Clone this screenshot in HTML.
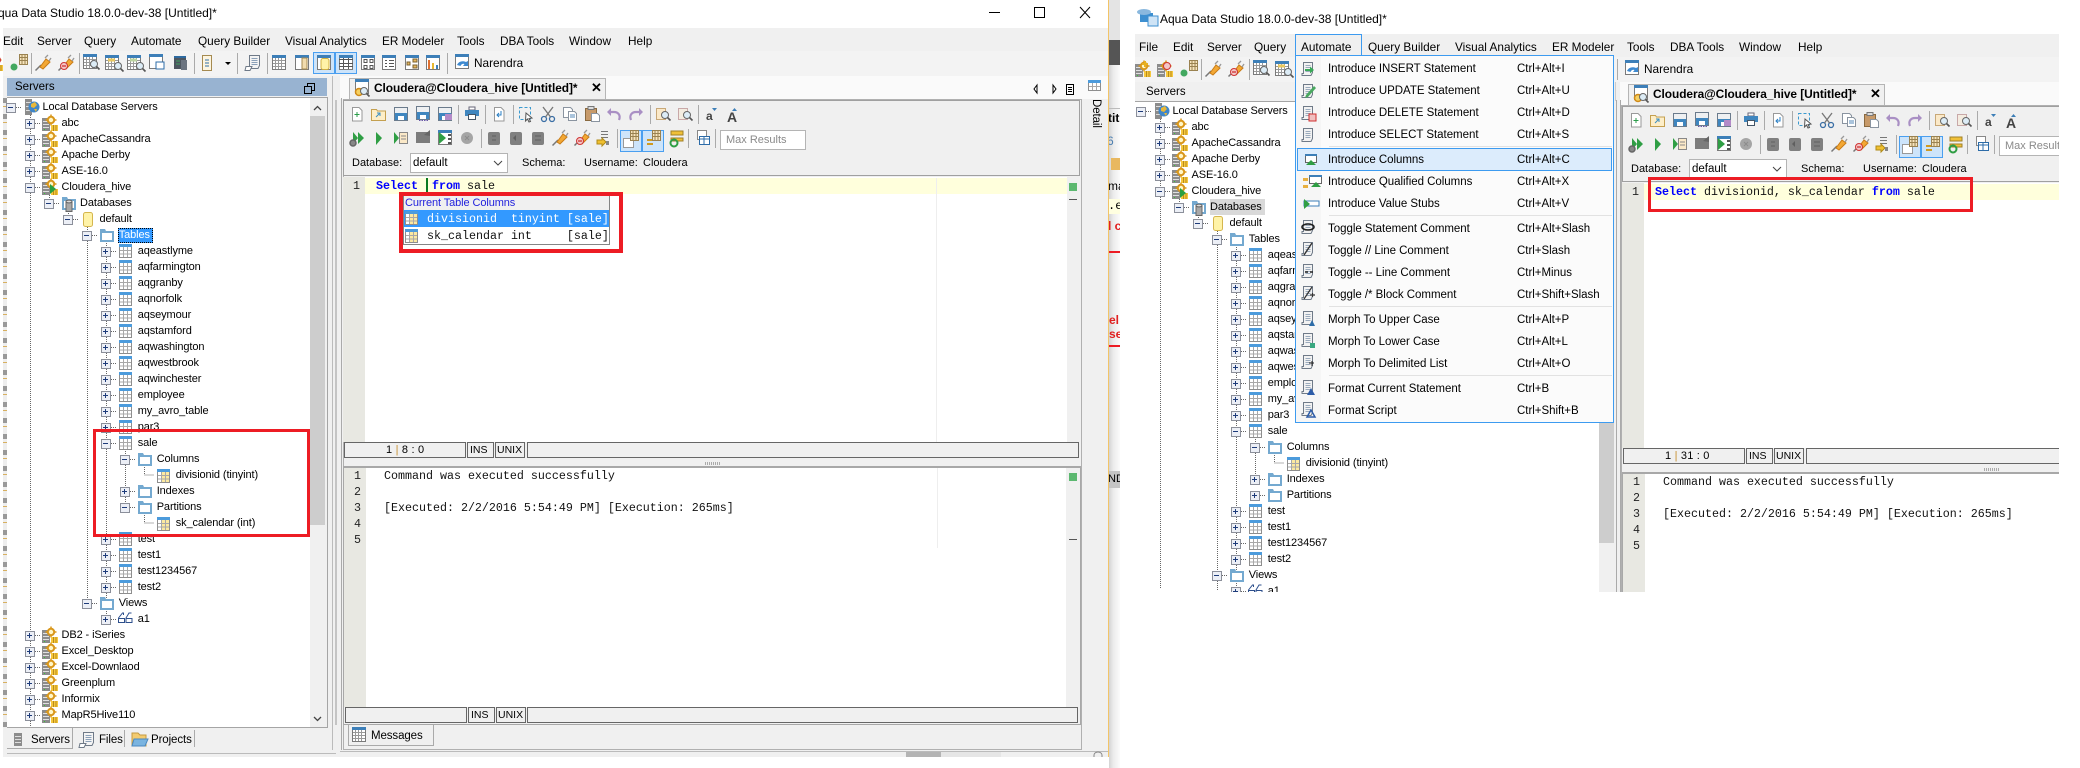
<!DOCTYPE html>
<html><head><meta charset="utf-8"><title>Aqua Data Studio</title>
<style>
html,body{margin:0;padding:0;width:2080px;height:768px;overflow:hidden;background:#fff}
body{position:relative;font:11px "Liberation Sans",sans-serif;color:#000}
div,p,svg{position:absolute;margin:0;box-sizing:border-box}
p{white-space:pre;line-height:16px}
svg{left:0;top:0;overflow:visible}
.m{font-size:11.8px}
.tr p{letter-spacing:-.1px}
.d0{left:42.5px}.d1{left:61.5px}.d2{left:80px}.d3{left:99.5px}.d4{left:118.7px}.d5{left:137.7px}.d6{left:156.7px}.d7{left:175.7px}
.c{font-family:"Liberation Mono",monospace;font-size:11.67px;color:#111}
.c b{color:#00f}
.ln{font-family:"Liberation Mono",monospace;font-size:11.67px;color:#222}
.st{background:#f0f0f0;border:1px solid #666;border-top-width:1px;height:16px}
.mi p{font-size:11.5px;letter-spacing:-.03px}
.sep{height:1px;background:#e2e2e2;left:33px;width:283px}
</style></head><body>
<svg width="0" height="0"><defs>
<g id="ep"><path d="M-4.5-4.5h9v9h-9z" fill="#eceff6" stroke="#8b8f9a"/><path d="M-3-.5h5M-.5-3v5" stroke="#1d3b7a"/><path d="M5-.5h5" stroke="#666" stroke-dasharray="1 1"/></g>
<g id="em"><path d="M-4.5-4.5h9v9h-9z" fill="#eceff6" stroke="#8b8f9a"/><path d="M-3-.5h5" stroke="#1d3b7a"/><path d="M5-.5h5" stroke="#666" stroke-dasharray="1 1"/></g>
<g id="tbl"><path d="M.5.5h12v13H.5z" fill="#fff" stroke="#8e8e8e"/><path d="M0 0h13v3H0z" fill="#4c9bdc"/><path d="M4.5 3v10M8.5 3v10M1 6.5h11M1 10h11" stroke="#a8a8a8"/></g>
<g id="col"><path d="M.5.5h12v13H.5z" fill="#fff" stroke="#8e8e8e"/><path d="M5 3h7v10H5z" fill="#fce9a0"/><path d="M0 0h13v3H0z" fill="#4c9bdc"/><path d="M4.5 3v10M8.5 3v10M1 6.5h11M1 10h11" stroke="#a8a8a8"/></g>
<g id="fold"><path d="M0 0h5l1 2h8v11H0z" fill="#74a9d0"/><path d="M2 4h10v7H2z" fill="#fff"/></g>
<g id="srv"><path d="M0 3h8v13H0z" fill="#8c8c8c"/><path d="M1 6.5h6M1 9.5h6M1 12.5h6" stroke="#e0e0e0"/><path d="M2 14.5h1" stroke="#3c3"/><circle cx="9" cy="5" r="3.2" fill="#fff6c8" stroke="#d9971c" stroke-width="2"/><path d="M9-.5v2M9 8.5v2M3.5 5h2M12.5 5h2" stroke="#d9971c" stroke-width="1.5"/><path d="M9 10h7v6H9z" fill="#f6c83e"/><path d="M11.5 10v6M14 10v6" stroke="#b88a1a"/></g>
<g id="glob"><path d="M0 0h7v16H0z" fill="#8c8c8c"/><path d="M1 3.5h5M1 7.5h5M1 11.5h5" stroke="#ddd"/><circle cx="9" cy="8" r="5.5" fill="#3f86c9"/><path d="M6 5l4-2 2 3-3 3-3-1zM9 10l3 0-1 3z" fill="#e8b83a"/></g>
<g id="dbf"><path d="M0 0h5l1 2h8v11H0z" fill="#74a9d0"/><path d="M2 4h10v7H2z" fill="#fff"/><path d="M4 4.5h6v10H4z" fill="#a8a8a8" stroke="#666"/><ellipse cx="7" cy="4.5" rx="3" ry="1.4" fill="#ddd" stroke="#666"/></g>
<g id="ydb"><rect x=".5" y=".5" width="9" height="14" rx="2" fill="#fff3a8" stroke="#d5b64e"/></g>
<g id="gl"><path d="M.5 11V7l4-5h1v2M8 11V7l3-5h2.5" fill="none" stroke="#2d4f8c"/><path d="M.5 7.5h6v4h-6zM8 7.5h6v4H8z" fill="none" stroke="#2d4f8c"/></g>
<g id="t"><path d="M-6.5-7.5h13v14h-13z" fill="#fff" stroke="#7a7a7a"/><path d="M-7-8H7v3H-7z" fill="#3d7fb8"/></g>
<g id="tg"><use href="#t"/><path d="M-6-2.5H6M-6 .5H6M-6 3.5H6M-3.5-5v11M-.5-5v11M2.5-5v11" stroke="#999"/></g>
<g id="mag"><circle cx="2" cy="2" r="3.5" fill="#dcecf6" stroke="#666"/><path d="M4.5 4.5l3 3" stroke="#555" stroke-width="1.6"/></g>
<g id="pg"><path d="M-4.5-6.5h6.5l3 3v10.5h-9.500z" fill="#fff" stroke="#999"/></g>
<g id="sv"><path d="M-6.500-6.500h13v13h-13z" fill="#eef0f2" stroke="#6b7b8c"/><path d="M-6-1H6v7H-6z" fill="#3f86bf"/><path d="M-3 2h6v4h-6z" fill="#fff"/></g>
<g id="plug"><path d="M-7.500 7.500L-2 2" stroke="#777" stroke-width="1.500"/><path d="M-3 4L3-4l4 3-7 7z" fill="#f3a835" stroke="#c97c16"/><path d="M2-5l3-3M6-2l2-3" stroke="#999" stroke-width="1.300"/></g>
<g id="px"><use href="#plug"/><circle cx="-2" cy="3" r="3.500" fill="#f3c6c6" stroke="#cf3434"/><path d="M-4 3h4" stroke="#cf3434" stroke-width="1.300"/></g>
<g id="tan"><path d="M-.500-7.500h8v10h-8z" fill="#f7e4bc" stroke="#9a8250"/><path d="M2-7v10M5-7v10M0-4.500h7M0-1.500h7" stroke="#9a8250"/></g>
<g id="scr"><path d="M-4.500-6.500h10v10l-1.500 3h-10v-2h1.500z" fill="#f4f4f4" stroke="#6f7a88"/><path d="M-2.500-3.500h6M-2.500-1.500h6M-2.500.5h6M-2.500 2.500h6" stroke="#8ba0b8"/></g>

<g id="chrome">
<use href="#srv" x="-35" y="55"/><path d="M-28 58h6m-3-3v6" stroke="#e8b020" stroke-width="2"/>
<use href="#srv" x="-13" y="55"/><circle cx="-3" cy="60" r="3.500" fill="#f3c6c6" stroke="#cf3434"/>
<use href="#tan" x="20" y="62"/><circle cx="14" cy="67" r="3.500" fill="#43a860"/>
<path d="M31.500 53v21" stroke="#aaa"/>
<use href="#plug" x="43" y="63"/><use href="#px" x="66" y="63"/>
<path d="M79.500 53v21" stroke="#aaa"/>
<use href="#tg" x="90" y="62"/><use href="#mag" x="92" y="62"/>
<use href="#tg" x="112" y="63"/><use href="#mag" x="116" y="64"/><path d="M108 60h7" stroke="#e8c860" stroke-width="3"/>
<use href="#tg" x="134" y="63"/><use href="#mag" x="138" y="64"/><path d="M130 60h7" stroke="#bcd4a0" stroke-width="3"/>
<use href="#t" x="156" y="62"/><path d="M156 62h8v7h-8z" fill="#fff" stroke="#2d6ca8"/>
<path d="M174 56h12v13h-12z" fill="#4d5660"/><path d="M174 56h12v2h-12z" fill="#2e6aa0"/><path d="M176 61h4M176 64h4" stroke="#3ea060"/><path d="M181 60h6v10h-6z" fill="#6b7480"/>
<path d="M194.500 53v21" stroke="#aaa"/>
<path d="M202.500 55.500h9v15h-9z" fill="#fdf5e0" stroke="#a58a50"/><path d="M205 60h4M205 63h4M205 66h4" stroke="#2f70a8"/>
<path d="M225 62h6l-3 3z" fill="#000"/><path d="M237.500 53v21" stroke="#aaa"/>
<use href="#scr" x="254" y="62"/><path d="M246 66.500h6l-2 4h-5z" fill="#fff" stroke="#6f7a88"/>
<path d="M267.500 53v21" stroke="#aaa"/>
<use href="#tg" x="279" y="63"/>
<use href="#t" x="302" y="63"/><path d="M302 58h5v11h-5z" fill="#f2dcae" stroke="#a58a50"/>
<path d="M313.500 52.500h21v21h-21z" fill="#cde4fa" stroke="#4a9ff0"/><path d="M335.500 52.500h21v21h-21z" fill="#cde4fa" stroke="#4a9ff0"/>
<use href="#t" x="324" y="63"/><rect x="321" y="58.500" width="8" height="11" rx="2" fill="#fff3a8" stroke="#d0b040"/>
<use href="#t" x="346" y="63"/><path d="M339 59.500h14M339 63.500h14M339 66.500h14M343.500 58v11M348.500 58v11" stroke="#555"/>
<use href="#t" x="368" y="63"/><path d="M364 59.500h3v3h-3zM370 59.500h3v3h-3zM364 65.500h3v3h-3zM370 65.500h3v3h-3z" fill="none" stroke="#555"/>
<use href="#t" x="389" y="63"/><path d="M385 60.500h2M389 60.500h5M385 63.500h2M389 63.500h5M385 66.500h2M389 66.500h5" stroke="#555"/>
<use href="#t" x="412" y="63"/><path d="M407 62h3v3h-3zM413 59h4v3h-4zM413 65h4v3h-4z" fill="#e6b860" stroke="#7a6030"/>
<use href="#t" x="433" y="63"/><path d="M428 60h2v9h-2z" fill="#e07030"/><path d="M432 63h2v6h-2z" fill="#e8b830"/><path d="M436 65h2v4h-2z" fill="#3d7fb8"/>
<path d="M447.500 53v21" stroke="#aaa"/>
<use href="#t" x="462" y="62"/><path d="M457 65a6 5 0 0 1 9-3l2-1 0 5-5 0 1.500-2a3 3 0 0 0-4 2z" fill="#3f8ad0"/>
</g>

<g id="edtb">
<use href="#pg" x="357" y="114"/><path d="M354.500 114.500h5M357 112v5" stroke="#2a9d4a"/>
<path d="M371.500 109.500h5l1 1.500h8v9.500h-14z" fill="#fdeec8" stroke="#c4a050"/><path d="M376 117l4-4m-3 0h3v3" stroke="#3a8fc4" fill="none"/>
<use href="#sv" x="401" y="114"/><use href="#sv" x="423" y="113"/><path d="M419 120.500h9" stroke="#6a5aa8" stroke-dasharray="1.500 1"/>
<use href="#sv" x="445" y="114"/><path d="M445 114h7v6h-7z" fill="#b38ac8"/>
<path d="M458.500 105v19" stroke="#aaa"/>
<path d="M469 107h6v3h-6z" fill="#fff" stroke="#667"/><path d="M465 110h14v6h-14z" fill="#3f86bf"/><path d="M468.500 114.500h7v5h-7z" fill="#fff" stroke="#456"/>
<path d="M485.500 105v19" stroke="#aaa"/>
<use href="#pg" x="499" y="114"/><path d="M501 111v4h-4m2-2l-2 2 2 2" stroke="#2a7fc4" fill="none"/>
<path d="M513.500 105v19" stroke="#aaa"/>
<path d="M519.500 107.500h11v12h-11z" fill="none" stroke="#3a9ad0" stroke-dasharray="3 2"/><path d="M526 113l6 5-3 .5 1.500 3-1.500.5-1.500-3-2 2z" fill="#fff" stroke="#555"/>
<circle cx="544" cy="119" r="2.500" fill="none" stroke="#3a6ea5" stroke-width="1.300"/><circle cx="552" cy="119" r="2.500" fill="none" stroke="#3a6ea5" stroke-width="1.300"/><path d="M543 107l7.500 10M553 107l-7.500 10" stroke="#777" stroke-width="1.300"/>
<path d="M563.500 107.500h7l2 2v8h-9z" fill="#fff" stroke="#8a94a0"/><path d="M568.500 111.500h6l2 2v7h-8z" fill="#fff" stroke="#8a94a0"/><path d="M570 115h5M570 117h5" stroke="#5588b8"/>
<path d="M585.500 108.500h11v12h-11z" fill="#c79a6a" stroke="#8a6a40"/><path d="M588 106.500h6v3h-6z" fill="#ddd" stroke="#777"/><path d="M591.500 113.500h6l2 2v6h-8z" fill="#fff" stroke="#8a94a0"/>
<path d="M619 120c2-5-1-8-5-8h-3" fill="none" stroke="#a98fc4" stroke-width="2.200"/><path d="M607 112l4-4v8z" fill="#a98fc4"/>
<path d="M631 120c-2-5 1-8 5-8h3" fill="none" stroke="#a98fc4" stroke-width="2.200"/><path d="M643 112l-4-4v8z" fill="#a98fc4"/>
<path d="M650.500 105v19" stroke="#aaa"/>
<path d="M656.500 108.500h9v11h-9z" fill="#fbe9c8" stroke="#c8a878"/><use href="#mag" x="663" y="113"/>
<path d="M678.500 108.500h9v11h-9z" fill="#f4ece0" stroke="#c8a8a8"/><use href="#mag" x="685" y="113"/>
<path d="M698.500 105v19" stroke="#aaa"/>
<text x="706" y="120" font-size="12" font-family="Liberation Sans" font-weight="bold" fill="#444">a</text><path d="M712 108h5l-2.500 3z" fill="#3d7fb8"/>
<text x="727" y="122" font-size="14" font-family="Liberation Sans" font-weight="bold" fill="#444">A</text><path d="M732 111h5l-2.500-3z" fill="#3d7fb8"/>

<path d="M353 132l5 6-5 6zM358 132l6 6-6 6z" fill="#2f9e44"/><circle cx="353" cy="143" r="3" fill="#888" stroke="#666" stroke-width="1.500"/>
<path d="M376 132l6 6-6 7z" fill="#2f9e44"/>
<path d="M394 132l5 6-5 6z" fill="#2f9e44"/><path d="M399.500 132.500h8v11h-8z" fill="#fbe9c8" stroke="#888"/><path d="M401 136h5M401 139h5" stroke="#888"/>
<path d="M416 132h14v11h-14z" fill="#7c7c7c"/><path d="M424 135l6-5v6z" fill="#666"/>
<use href="#t" x="445" y="138"/><path d="M439 132l7 6-7 6z" fill="#2f9e44"/><path d="M448 134h3v2h-3zM448 138h3v2h-3zM448 142h3v2h-3z" fill="#555"/>
<circle cx="467" cy="138" r="6" fill="#a5a5a5"/><path d="M465 136l4 4m0-4l-4 4" stroke="#8c8c8c"/>
<path d="M481.500 129v19" stroke="#aaa"/>
<rect x="488" y="132" width="12" height="13" rx="2" fill="#808080"/><path d="M492 136h4M492 140h4" stroke="#5f5f5f"/>
<rect x="510" y="132" width="12" height="13" rx="2" fill="#808080"/><path d="M513 138l3-3v6z" fill="#5f5f5f"/>
<rect x="532" y="132" width="12" height="13" rx="2" fill="#808080"/><path d="M535 136h6M535 140h6" stroke="#5f5f5f"/>
<use href="#plug" x="560" y="138"/><use href="#px" x="582" y="138"/>
<path d="M601 131.500h7M601 134.500h7M601 137.500h7" stroke="#777"/><path d="M597 140h5v-2l4 4-4 4v-2h-5z" fill="#f0c030" stroke="#b08a18"/><path d="M606 141h3v4h-3z" fill="#888"/>
<path d="M617.500 129v19" stroke="#aaa"/>
<path d="M620.500 130.500h21v21h-21z" fill="#cde4fa" stroke="#4a9ff0"/><path d="M642.500 130.500h21v21h-21z" fill="#cde4fa" stroke="#4a9ff0"/>
<path d="M623.500 138.500h10v9h-10z" fill="#fff" stroke="#999"/><use href="#tan" x="631" y="138"/>
<path d="M647 140h6M647 144h6" stroke="#d09a20" stroke-width="2"/><use href="#tan" x="653" y="138"/>
<path d="M671 131h12v4h-12zM671 138h12v3h-12z" fill="#f0c038" stroke="#a08028"/><circle cx="674" cy="143" r="3.500" fill="none" stroke="#2f9e44" stroke-width="2"/>
<path d="M688.500 129v19" stroke="#aaa"/>
<path d="M697.500 130.500h9v9h-9z" fill="#fff" stroke="#888"/><path d="M699.500 136.500h10v8h-10z" fill="#fff" stroke="#2d6ca8"/><path d="M700 139h9M704 137v7" stroke="#2d6ca8"/>
<path d="M715.500 129v19" stroke="#aaa"/>
</g>

<g id="sc"><path d="M-4.500-6.500h9v10l-1.500 3h-9v-2h1.500z" fill="#f2f2f2" stroke="#6f7a88"/><path d="M-2.500-3.500h5M-2.500-1.500h5M-2.500.5h5M-2.500 2.500h5" stroke="#9aaabc"/></g>
</defs></svg>

<!-- LEFT WINDOW BG -->
<div style="left:3px;top:28px;width:1105px;height:729px;background:#f0f0f0"></div>
<div style="left:3px;top:51px;width:1105px;height:25px;background:#f3f3f3"></div>
<div style="left:3px;top:98px;width:4px;height:630px;background:repeating-linear-gradient(#999 0 5px,#eee 5px 8px,#d8b060 8px 9px,#eee 9px 16px)"></div>
<div style="left:340px;top:76px;width:768px;height:23px;background:#fafafa"></div>
<div style="left:1108px;top:0;width:1px;height:757px;background:#f2c468"></div>

<!-- BEHIND WINDOW STRIP -->
<div style="left:1109px;top:0;width:11px;height:768px;overflow:hidden;background:linear-gradient(90deg,#d4d4d4,#ececec 40%,#fbfbfb 100%)">
<div style="left:0;top:0;width:11px;height:40px;background:#e4e4e4"></div>
<div style="left:0;top:40px;width:11px;height:25px;background:#555"></div>
<div style="left:0;top:108px;width:11px;height:1px;background:#bbb"></div>
<p style="left:-1px;top:110px;font-weight:bold;font-size:12px">tit</p>
<p style="left:-2px;top:133px;font-size:12px;color:#4c7fb0">6</p>
<div style="left:2px;top:158px;width:9px;height:12px;background:#e8b860"></div>
<p style="left:-1px;top:178px;font-size:12px">ma</p>
<div style="left:0;top:199px;width:11px;height:15px;background:#ffffe0"></div>
<p style="left:-1px;top:198px;font-family:'Liberation Mono';font-size:12px">.er</p>
<p style="left:-1px;top:218px;color:#e02020;font-weight:bold;font-size:12px">l c</p>
<div style="left:0;top:251px;width:11px;height:2px;background:#ed1c24"></div>
<p style="left:0;top:312px;color:#e02020;font-weight:bold;font-size:12px">el</p>
<p style="left:0;top:326px;color:#e02020;font-weight:bold;font-size:12px">ser</p>
<div style="left:0;top:345px;width:11px;height:2px;background:#ed1c24"></div>
<div style="left:0;top:471px;width:11px;height:17px;background:#c4c4c4"></div>
<p style="left:-1px;top:471px">ND</p>
</div>

<!-- RIGHT WINDOW BG -->
<div style="left:1135px;top:34px;width:924px;height:558px;background:#f0f0f0"></div>
<div style="left:1135px;top:57px;width:924px;height:25px;background:#f3f3f3"></div>
<div style="left:1620px;top:82px;width:439px;height:23px;background:#fafafa"></div>

<!-- CHROME ICONS -->
<svg width="2080" height="768"><use href="#chrome"/><use href="#chrome" transform="translate(1170 6)"/>
<path d="M1140 13h13v9h-13z" fill="#3d8fd0"/><path d="M1148 16h10v10h-10z" fill="#cfe4f6" stroke="#3d8fd0"/><ellipse cx="1144" cy="12" rx="7" ry="3" fill="#8ab8de"/>
<path d="M989 12.500h11" stroke="#000"/><path d="M1034.500 7.500h10v10h-10z" fill="none" stroke="#000"/><path d="M1080 7l10 11m0-11l-10 11" stroke="#000"/>
</svg>

<!-- LEFT CHROME TEXT -->
<div style="left:0;top:0;width:1108px;height:70px" class="m">
<p style="left:-10px;top:5px;font-size:12px">Aqua Data Studio 18.0.0-dev-38 [Untitled]*</p>
<p style="left:3px;top:33px">Edit</p><p style="left:37px;top:33px">Server</p><p style="left:84px;top:33px">Query</p><p style="left:131px;top:33px">Automate</p><p style="left:198px;top:33px">Query Builder</p><p style="left:285px;top:33px">Visual Analytics</p><p style="left:382px;top:33px">ER Modeler</p><p style="left:457px;top:33px">Tools</p><p style="left:500px;top:33px">DBA Tools</p><p style="left:569px;top:33px">Window</p><p style="left:628px;top:33px">Help</p>
<p style="left:474px;top:55px">Narendra</p>
</div>
<!-- RIGHT CHROME TEXT -->
<div style="left:1170px;top:6px;width:889px;height:70px" class="m">
<p style="left:-10px;top:5px;font-size:12px">Aqua Data Studio 18.0.0-dev-38 [Untitled]*</p>
<p style="left:-31px;top:33px">File</p><p style="left:3px;top:33px">Edit</p><p style="left:37px;top:33px">Server</p><p style="left:84px;top:33px">Query</p><p style="left:131px;top:33px">Automate</p><p style="left:198px;top:33px">Query Builder</p><p style="left:285px;top:33px">Visual Analytics</p><p style="left:382px;top:33px">ER Modeler</p><p style="left:457px;top:33px">Tools</p><p style="left:500px;top:33px">DBA Tools</p><p style="left:569px;top:33px">Window</p><p style="left:628px;top:33px">Help</p>
<p style="left:474px;top:55px">Narendra</p>
</div>

<!-- LEFT SERVERS PANEL -->
<div style="left:7px;top:78px;width:320px;height:18px;background:#98b3d1"></div>
<p style="left:15px;top:79px;font-size:11.5px">Servers</p>
<svg width="340" height="110"><path d="M304.500 86.500h7v7h-7zM307.500 86v-2.500h7v7h-3" fill="none" stroke="#000"/></svg>
<div style="left:7px;top:97px;width:320px;height:631px;background:#fff;border-top:1px solid #a5a5a5;border-bottom:1px solid #a5a5a5"></div>
<div style="left:310px;top:98px;width:17px;height:629px;background:#f0f0f0"></div>
<div style="left:310px;top:116px;width:15px;height:409px;background:#cdcdcd"></div>
<div style="left:327px;top:97px;width:1px;height:631px;background:#a5a5a5"></div>
<div style="left:332px;top:76px;width:1px;height:674px;background:#bbb"></div>
<div style="left:335px;top:100px;width:2px;height:625px;background:#c4c4c4"></div>
<div style="left:341px;top:98px;width:1px;height:652px;background:#aaa"></div>
<svg width="340" height="768"><path d="M314 110l3.500-3.500 3.500 3.500M314 717l3.500 3.500 3.500-3.500" fill="none" stroke="#444" stroke-width="1.300"/>
<g stroke="#666" stroke-dasharray="1 1" fill="none"><path d="M30.500 115v612M49.500 195v9M68.500 211v9M87.500 227v376M106.500 243v376M125.500 451v56M144.500 467v8h10M144.500 515v8h10"/></g>
<use href="#em" x="11" y="108"/><use href="#glob" x="25" y="99"/>
<use href="#ep" x="30" y="124"/><use href="#srv" x="42" y="115"/>
<use href="#ep" x="30" y="140"/><use href="#srv" x="42" y="131"/>
<use href="#ep" x="30" y="156"/><use href="#srv" x="42" y="147"/>
<use href="#ep" x="30" y="172"/><use href="#srv" x="42" y="163"/>
<use href="#em" x="30" y="188"/><use href="#srv" x="42" y="179"/><path d="M50 184l6 5-6 5z" fill="#2aa040"/>
<use href="#em" x="49" y="204"/><use href="#dbf" x="62" y="197"/>
<use href="#em" x="68" y="220"/><use href="#ydb" x="83" y="212"/>
<use href="#em" x="87" y="236"/><use href="#fold" x="100" y="229"/>
<use href="#ep" x="106" y="252"/><use href="#tbl" x="119" y="244"/>
<use href="#ep" x="106" y="268"/><use href="#tbl" x="119" y="260"/>
<use href="#ep" x="106" y="284"/><use href="#tbl" x="119" y="276"/>
<use href="#ep" x="106" y="300"/><use href="#tbl" x="119" y="292"/>
<use href="#ep" x="106" y="316"/><use href="#tbl" x="119" y="308"/>
<use href="#ep" x="106" y="332"/><use href="#tbl" x="119" y="324"/>
<use href="#ep" x="106" y="348"/><use href="#tbl" x="119" y="340"/>
<use href="#ep" x="106" y="364"/><use href="#tbl" x="119" y="356"/>
<use href="#ep" x="106" y="380"/><use href="#tbl" x="119" y="372"/>
<use href="#ep" x="106" y="396"/><use href="#tbl" x="119" y="388"/>
<use href="#ep" x="106" y="412"/><use href="#tbl" x="119" y="404"/>
<use href="#ep" x="106" y="428"/><use href="#tbl" x="119" y="420"/>
<use href="#em" x="106" y="444"/><use href="#tbl" x="119" y="436"/>
<use href="#em" x="125" y="460"/><use href="#fold" x="138" y="453"/>
<use href="#col" x="157" y="469"/>
<use href="#ep" x="125" y="492"/><use href="#fold" x="138" y="485"/>
<use href="#em" x="125" y="508"/><use href="#fold" x="138" y="501"/>
<use href="#col" x="157" y="517"/>
<use href="#ep" x="106" y="540"/><use href="#tbl" x="119" y="532"/>
<use href="#ep" x="106" y="556"/><use href="#tbl" x="119" y="548"/>
<use href="#ep" x="106" y="572"/><use href="#tbl" x="119" y="564"/>
<use href="#ep" x="106" y="588"/><use href="#tbl" x="119" y="580"/>
<use href="#em" x="87" y="604"/><use href="#fold" x="100" y="597"/>
<use href="#ep" x="106" y="620"/><use href="#gl" x="118" y="611"/>
<use href="#ep" x="30" y="636"/><use href="#srv" x="42" y="627"/>
<use href="#ep" x="30" y="652"/><use href="#srv" x="42" y="643"/>
<use href="#ep" x="30" y="668"/><use href="#srv" x="42" y="659"/>
<use href="#ep" x="30" y="684"/><use href="#srv" x="42" y="675"/>
<use href="#ep" x="30" y="700"/><use href="#srv" x="42" y="691"/>
<use href="#ep" x="30" y="716"/><use href="#srv" x="42" y="707"/>
</svg>
<div style="left:118px;top:228px;width:35px;height:15px;background:#3399ff;outline:1px dotted #000;outline-offset:-1px"></div>
<div class="tr" style="left:0;top:0;width:310px;height:727px">
<p class="d0" style="top:99px">Local Database Servers</p>
<p class="d1" style="top:115px">abc</p><p class="d1" style="top:131px">ApacheCassandra</p><p class="d1" style="top:147px">Apache Derby</p><p class="d1" style="top:163px">ASE-16.0</p><p class="d1" style="top:179px">Cloudera_hive</p>
<p class="d2" style="top:195px">Databases</p><p class="d3" style="top:211px">default</p><p class="d4" style="top:227px;color:#fff">Tables</p>
<p class="d5" style="top:243px">aqeastlyme</p><p class="d5" style="top:259px">aqfarmington</p><p class="d5" style="top:275px">aqgranby</p><p class="d5" style="top:291px">aqnorfolk</p><p class="d5" style="top:307px">aqseymour</p><p class="d5" style="top:323px">aqstamford</p><p class="d5" style="top:339px">aqwashington</p><p class="d5" style="top:355px">aqwestbrook</p><p class="d5" style="top:371px">aqwinchester</p><p class="d5" style="top:387px">employee</p><p class="d5" style="top:403px">my_avro_table</p><p class="d5" style="top:419px">par3</p><p class="d5" style="top:435px">sale</p>
<p class="d6" style="top:451px">Columns</p><p class="d7" style="top:467px">divisionid (tinyint)</p><p class="d6" style="top:483px">Indexes</p><p class="d6" style="top:499px">Partitions</p><p class="d7" style="top:515px">sk_calendar (int)</p>
<p class="d5" style="top:531px">test</p><p class="d5" style="top:547px">test1</p><p class="d5" style="top:563px">test1234567</p><p class="d5" style="top:579px">test2</p>
<p class="d4" style="top:595px">Views</p><p class="d5" style="top:611px">a1</p>
<p class="d1" style="top:627px">DB2 - iSeries</p><p class="d1" style="top:643px">Excel_Desktop</p><p class="d1" style="top:659px">Excel-Downlaod</p><p class="d1" style="top:675px">Greenplum</p><p class="d1" style="top:691px">Informix</p><p class="d1" style="top:707px">MapR5Hive110</p>
</div>
<!-- bottom tabs -->
<div style="left:7px;top:728px;width:66px;height:21px;background:#f0f0f0;border-right:1px solid #aaa;border-bottom:1px solid #aaa"></div>
<div style="left:7px;top:753px;width:329px;height:1px;background:#bbb"></div>
<div style="left:124px;top:730px;width:1px;height:17px;background:#aaa"></div>
<div style="left:194px;top:730px;width:1px;height:17px;background:#aaa"></div>
<svg width="340" height="768"><path d="M14 733h8v13h-8z" fill="#8c8c8c"/><path d="M15 736.500h6M15 739.500h6M15 742.500h6" stroke="#ddd"/>
<use href="#scr" x="88" y="739"/><path d="M80 743.500h6l-2 4h-5z" fill="#fff" stroke="#6f7a88"/>
<path d="M132 733h6l2 2h6v11h-14z" fill="#f3cb6f" stroke="#c49a40"/><path d="M134 739h14l-3 7h-13z" fill="#7ab4e0" stroke="#4a88c0"/></svg>
<p style="left:31px;top:732px;font-size:11.5px;letter-spacing:-.1px">Servers</p><p style="left:99px;top:732px;font-size:11.5px;letter-spacing:-.1px">Files</p><p style="left:151px;top:732px;font-size:11.5px;letter-spacing:-.1px">Projects</p>

<!-- RIGHT TREE PANEL -->
<div style="left:1135px;top:82px;width:481px;height:19px;background:#f0f0f0;border-right:1px solid #ccc"></div>
<p style="left:1146px;top:84px;font-size:11.5px">Servers</p>
<div style="left:1135px;top:101px;width:464px;height:491px;background:#fff;border-top:1px solid #a5a5a5"></div>
<div style="left:1599px;top:102px;width:15px;height:490px;background:#f0f0f0"></div>
<div style="left:1599px;top:120px;width:15px;height:423px;background:#cdcdcd"></div>
<div style="left:1616px;top:100px;width:1px;height:492px;background:#aaa"></div>
<div style="left:1620px;top:100px;width:1px;height:492px;background:#aaa"></div>
<div style="left:1210px;top:199px;width:55px;height:16px;background:#d9d9d9"></div>
<svg width="2080" height="768"><g transform="translate(1130 4)">
<g stroke="#666" stroke-dasharray="1 1" fill="none"><path d="M30.500 115v470M49.500 195v9M68.500 211v9M87.500 227v360M106.500 243v344M125.500 435v44M144.500 451v8h10"/></g>
<use href="#em" x="11" y="108"/><use href="#glob" x="25" y="99"/>
<use href="#ep" x="30" y="124"/><use href="#srv" x="42" y="115"/>
<use href="#ep" x="30" y="140"/><use href="#srv" x="42" y="131"/>
<use href="#ep" x="30" y="156"/><use href="#srv" x="42" y="147"/>
<use href="#ep" x="30" y="172"/><use href="#srv" x="42" y="163"/>
<use href="#em" x="30" y="188"/><use href="#srv" x="42" y="179"/><path d="M50 184l6 5-6 5z" fill="#2aa040"/>
<use href="#em" x="49" y="204"/><use href="#dbf" x="62" y="197"/>
<use href="#em" x="68" y="220"/><use href="#ydb" x="83" y="212"/>
<use href="#em" x="87" y="236"/><use href="#fold" x="100" y="229"/>
<use href="#ep" x="106" y="252"/><use href="#tbl" x="119" y="244"/>
<use href="#ep" x="106" y="268"/><use href="#tbl" x="119" y="260"/>
<use href="#ep" x="106" y="284"/><use href="#tbl" x="119" y="276"/>
<use href="#ep" x="106" y="300"/><use href="#tbl" x="119" y="292"/>
<use href="#ep" x="106" y="316"/><use href="#tbl" x="119" y="308"/>
<use href="#ep" x="106" y="332"/><use href="#tbl" x="119" y="324"/>
<use href="#ep" x="106" y="348"/><use href="#tbl" x="119" y="340"/>
<use href="#ep" x="106" y="364"/><use href="#tbl" x="119" y="356"/>
<use href="#ep" x="106" y="380"/><use href="#tbl" x="119" y="372"/>
<use href="#ep" x="106" y="396"/><use href="#tbl" x="119" y="388"/>
<use href="#ep" x="106" y="412"/><use href="#tbl" x="119" y="404"/>
<use href="#em" x="106" y="428"/><use href="#tbl" x="119" y="420"/>
<use href="#em" x="125" y="444"/><use href="#fold" x="138" y="437"/>
<use href="#col" x="157" y="453"/>
<use href="#ep" x="125" y="476"/><use href="#fold" x="138" y="469"/>
<use href="#ep" x="125" y="492"/><use href="#fold" x="138" y="485"/>
<use href="#ep" x="106" y="508"/><use href="#tbl" x="119" y="500"/>
<use href="#ep" x="106" y="524"/><use href="#tbl" x="119" y="516"/>
<use href="#ep" x="106" y="540"/><use href="#tbl" x="119" y="532"/>
<use href="#ep" x="106" y="556"/><use href="#tbl" x="119" y="548"/>
<use href="#em" x="87" y="572"/><use href="#fold" x="100" y="565"/>
<use href="#ep" x="106" y="588"/><use href="#gl" x="118" y="579"/>
</g></svg>
<div class="tr" style="left:1130px;top:4px;width:470px;height:588px">
<p class="d0" style="top:99px">Local Database Servers</p>
<p class="d1" style="top:115px">abc</p><p class="d1" style="top:131px">ApacheCassandra</p><p class="d1" style="top:147px">Apache Derby</p><p class="d1" style="top:163px">ASE-16.0</p><p class="d1" style="top:179px">Cloudera_hive</p>
<p class="d2" style="top:195px">Databases</p><p class="d3" style="top:211px">default</p><p class="d4" style="top:227px">Tables</p>
<p class="d5" style="top:243px">aqeastlyme</p><p class="d5" style="top:259px">aqfarmington</p><p class="d5" style="top:275px">aqgranby</p><p class="d5" style="top:291px">aqnorfolk</p><p class="d5" style="top:307px">aqseymour</p><p class="d5" style="top:323px">aqstamford</p><p class="d5" style="top:339px">aqwashington</p><p class="d5" style="top:355px">aqwestbrook</p><p class="d5" style="top:371px">employee</p><p class="d5" style="top:387px">my_avro_table</p><p class="d5" style="top:403px">par3</p><p class="d5" style="top:419px">sale</p>
<p class="d6" style="top:435px">Columns</p><p class="d7" style="top:451px">divisionid (tinyint)</p><p class="d6" style="top:467px">Indexes</p><p class="d6" style="top:483px">Partitions</p>
<p class="d5" style="top:499px">test</p><p class="d5" style="top:515px">test1</p><p class="d5" style="top:531px">test1234567</p><p class="d5" style="top:547px">test2</p>
<p class="d4" style="top:563px">Views</p><p class="d5" style="top:579px">a1</p>
</div>

<!-- LEFT EDITOR -->
<div style="left:0;top:0;width:1108px;height:768px">
<div style="left:349px;top:78px;width:257px;height:21px;background:#f0f0f0;border:1px solid #b5b5b5;border-bottom:0"></div>
<p style="left:374px;top:80px;font-weight:bold;font-size:11.9px;letter-spacing:-.05px">Cloudera@Cloudera_hive [Untitled]*</p>
<p style="left:591px;top:80px;font-weight:bold;font-size:13px">✕</p>
<div style="left:343px;top:99px;width:739px;height:651px;border:1px solid #b0b0b0"></div>
<div style="left:343px;top:100px;width:737px;height:76px;background:#f0f0f0;border:1px solid #a0a0a0"></div>
<div style="left:343px;top:177px;width:22px;height:265px;background:#e8e8e2"></div>
<div style="left:365px;top:177px;width:702px;height:265px;background:#fff"></div>
<div style="left:365px;top:178px;width:702px;height:16px;background:#ffffdc"></div>
<div style="left:936px;top:178px;width:1px;height:264px;background:#eee"></div>
<div style="left:1069px;top:183px;width:8px;height:8px;background:#5cb870"></div>
<div style="left:1069px;top:199px;width:8px;height:1px;background:#555"></div>
<div style="left:426px;top:178px;width:2px;height:16px;background:#0a7a20"></div>
<p class="ln" style="left:353px;top:178px">1</p>
<p class="c" style="left:376px;top:178px"><b>Select</b> </p><p class="c" style="left:432px;top:178px"><b>from</b> sale</p>
<div class="st" style="left:344px;top:442px;width:122px"></div><div class="st" style="left:467px;top:442px;width:27px"></div><div class="st" style="left:495px;top:442px;width:30px"></div><div class="st" style="left:527px;top:442px;width:552px"></div>
<p style="left:386px;top:442px;letter-spacing:.2px">1 <span style="color:#c89030">|</span> 8 : 0</p><p style="left:470px;top:442px;font-size:10.5px">INS</p><p style="left:497px;top:442px;font-size:10.5px">UNIX</p>
<div style="left:705px;top:462px;width:16px;height:3px;background:repeating-linear-gradient(90deg,#aaa 0 1px,transparent 1px 2px)"></div>
<div style="left:343px;top:466px;width:738px;height:259px;background:#f0f0f0;border:1px solid #a8a8a8;border-top-width:2px"></div>
<div style="left:344px;top:468px;width:22px;height:239px;background:#e8e8e2"></div>
<div style="left:366px;top:468px;width:700px;height:239px;background:#fff"></div>
<div style="left:937px;top:468px;width:1px;height:80px;background:#eee"></div>
<div style="left:1069px;top:473px;width:8px;height:8px;background:#5cb870"></div>
<div style="left:1069px;top:539px;width:8px;height:1px;background:#555"></div>
<p class="ln" style="left:354px;top:468px">1</p><p class="ln" style="left:354px;top:484px">2</p><p class="ln" style="left:354px;top:500px">3</p><p class="ln" style="left:354px;top:516px">4</p><p class="ln" style="left:354px;top:532px">5</p>
<p class="c" style="left:384px;top:468px">Command was executed successfully</p>
<p class="c" style="left:384px;top:500px">[Executed: 2/2/2016 5:54:49 PM] [Execution: 265ms]</p>
<div class="st" style="left:345px;top:707px;width:122px"></div><div class="st" style="left:468px;top:707px;width:27px"></div><div class="st" style="left:496px;top:707px;width:30px"></div><div class="st" style="left:527px;top:707px;width:551px"></div>
<p style="left:471px;top:707px;font-size:10.5px">INS</p><p style="left:498px;top:707px;font-size:10.5px">UNIX</p>
<div style="left:348px;top:725px;width:86px;height:21px;background:#f0f0f0;border:1px solid #aaa;border-top:0"></div>
<svg width="1108" height="768"><use href="#tg" x="359" y="735"/></svg>
<p style="left:371px;top:728px;font-size:11.5px;letter-spacing:-.1px">Messages</p>
</div>
<div style="left:340px;top:751px;width:768px;height:1px;background:#bbb"></div>
<div style="left:906px;top:752px;width:95px;height:5px;background:#e6e6e6"></div><div style="left:906px;top:752px;width:35px;height:5px;background:#b4b4b4"></div>
<svg width="1108" height="768"><path d="M1094 757v-2a4 3 0 0 1 8 0v2" fill="none" stroke="#888"/>
<path d="M1037 85l-3 4 3 4zM1053 85l3 4-3 4z" fill="#fff" stroke="#000"/><path d="M1066.500 84.500h7v10h-7z" fill="none" stroke="#000"/><path d="M1068 87.500h4M1068 89.500h4M1068 91.500h4" stroke="#000"/>
<path d="M1088.500 81.500h12v9h-12z" fill="#fff" stroke="#8e8e8e"/><path d="M1088 80h13v3h-13z" fill="#4c9bdc"/><path d="M1092.500 83v7M1096.500 83v7M1089 86.500h11" stroke="#a8a8a8"/></svg>
<p style="left:1089px;top:99px;writing-mode:vertical-rl;font-size:11.5px;letter-spacing:-.1px;line-height:14px">Detail</p>

<!-- popup -->
<div style="left:403px;top:195px;width:207px;height:50px;background:#fff;border:1px solid #858585"></div>
<div style="left:404px;top:196px;width:205px;height:14px;background:#f0f0f0"></div>
<div style="left:404px;top:210px;width:205px;height:17px;background:#3399ff"></div>
<svg width="700" height="300"><use href="#col" x="405" y="211"/><use href="#col" x="405" y="229"/></svg>
<p style="left:405px;top:195px;color:#2222dd;font-size:11px;letter-spacing:-.1px">Current Table Columns</p>
<p class="c" style="left:427px;top:211px;color:#fff">divisionid  tinyint [sale]</p>
<p class="c" style="left:427px;top:228px">sk_calendar int     [sale]</p>

<!-- RIGHT EDITOR -->
<div style="left:1279px;top:6px;width:801px;height:586px">
<div style="left:349px;top:78px;width:257px;height:21px;background:#f0f0f0;border:1px solid #b5b5b5;border-bottom:0"></div>
<p style="left:374px;top:80px;font-weight:bold;font-size:11.9px;letter-spacing:-.05px">Cloudera@Cloudera_hive [Untitled]*</p>
<p style="left:591px;top:80px;font-weight:bold;font-size:13px">✕</p>
<div style="left:342px;top:99px;width:459px;height:487px;border-left:1px solid #b0b0b0;border-top:1px solid #b0b0b0"></div>
<div style="left:343px;top:100px;width:458px;height:76px;background:#f0f0f0;border:1px solid #a0a0a0;border-right:0"></div>
<div style="left:343px;top:177px;width:22px;height:265px;background:#e8e8e2"></div>
<div style="left:365px;top:177px;width:436px;height:265px;background:#fff"></div>
<div style="left:365px;top:178px;width:436px;height:16px;background:#ffffdc"></div>
<p class="ln" style="left:353px;top:178px">1</p>
<p class="c" style="left:376px;top:178px"><b>Select</b> divisionid, sk_calendar <b>from</b> sale</p>
<div class="st" style="left:344px;top:442px;width:122px"></div><div class="st" style="left:467px;top:442px;width:27px"></div><div class="st" style="left:495px;top:442px;width:30px"></div><div class="st" style="left:527px;top:442px;width:274px"></div>
<p style="left:386px;top:442px;letter-spacing:.2px">1 <span style="color:#c89030">|</span> 31 : 0</p><p style="left:470px;top:442px;font-size:10.5px">INS</p><p style="left:497px;top:442px;font-size:10.5px">UNIX</p>
<div style="left:705px;top:462px;width:16px;height:3px;background:repeating-linear-gradient(90deg,#aaa 0 1px,transparent 1px 2px)"></div>
<div style="left:343px;top:466px;width:458px;height:120px;background:#fff;border-top:2px solid #a8a8a8;border-left:1px solid #a8a8a8"></div>
<div style="left:344px;top:468px;width:22px;height:118px;background:#e8e8e2"></div>
<p class="ln" style="left:354px;top:468px">1</p><p class="ln" style="left:354px;top:484px">2</p><p class="ln" style="left:354px;top:500px">3</p><p class="ln" style="left:354px;top:516px">4</p><p class="ln" style="left:354px;top:532px">5</p>
<p class="c" style="left:384px;top:468px">Command was executed successfully</p>
<p class="c" style="left:384px;top:500px">[Executed: 2/2/2016 5:54:49 PM] [Execution: 265ms]</p>
</div>

<!-- toolbar layers (both editors) -->
<svg width="2080" height="768"><use href="#edtb"/><use href="#edtb" transform="translate(1279 6)"/></svg>
<div style="left:720px;top:130px;width:86px;height:20px;background:#fff;border:1px solid #b4b4b4"></div>
<p style="left:726px;top:132px;color:#8a8a8a;font-size:11px">Max Results</p>
<div style="left:410px;top:153px;width:98px;height:20px;background:#fff;border:1px solid #b4b4b4"></div>
<p style="left:413px;top:155px;font-size:11.5px">default</p>
<p style="left:352px;top:155px;font-size:11px">Database:</p><p style="left:522px;top:155px;font-size:11px">Schema:</p><p style="left:584px;top:155px;font-size:11px">Username:</p><p style="left:643px;top:155px;font-size:11px">Cloudera</p>
<div style="left:1999px;top:136px;width:86px;height:20px;background:#fff;border:1px solid #b4b4b4"></div>
<p style="left:2005px;top:138px;color:#8a8a8a;font-size:11px">Max Results</p>
<div style="left:1689px;top:159px;width:98px;height:20px;background:#fff;border:1px solid #b4b4b4"></div>
<p style="left:1692px;top:161px;font-size:11.5px">default</p>
<p style="left:1631px;top:161px;font-size:11px">Database:</p><p style="left:1801px;top:161px;font-size:11px">Schema:</p><p style="left:1863px;top:161px;font-size:11px">Username:</p><p style="left:1922px;top:161px;font-size:11px">Cloudera</p>
<svg width="2080" height="768"><path d="M494 161l4 4 4-4M1773 167l4 4 4-4" fill="none" stroke="#444"/>
<use href="#t" x="362" y="87"/><circle cx="359" cy="92" r="3.500" fill="#f6d060" stroke="#d08a18" stroke-width="1.500"/><use href="#mag" x="362" y="89"/>
<use href="#t" x="1641" y="93"/><circle cx="1638" cy="98" r="3.500" fill="#f6d060" stroke="#d08a18" stroke-width="1.500"/><use href="#mag" x="1641" y="95"/></svg>

<!-- right clipping -->
<div style="left:2059px;top:0;width:21px;height:768px;background:#fff"></div>
<div style="left:1120px;top:592px;width:960px;height:176px;background:#fff"></div>

<!-- RED BOXES -->
<div style="left:93px;top:429px;width:217px;height:108px;border:3px solid #ed1c24"></div>
<div style="left:399px;top:192px;width:224px;height:61px;border:4px solid #ed1c24"></div>
<div style="left:1648px;top:177px;width:325px;height:35px;border:3px solid #ed1c24"></div>

<!-- AUTOMATE MENU -->
<div style="left:1295px;top:34px;width:67px;height:22px;border:1px solid #3d9bf0;border-bottom:0"></div>
<div class="mi" style="left:1295px;top:55px;width:319px;height:368px;background:#fbfbfb;border:1px solid #3d9bf0">
<div style="left:0;top:0;width:25px;height:366px;background:#f6f6f6"></div>
<div style="left:1px;top:92px;width:315px;height:23px;background:#dcecfc;border:1px solid #3d9bf0"></div>
<div class="sep" style="top:90px"></div><div class="sep" style="top:159px"></div><div class="sep" style="top:250px"></div><div class="sep" style="top:319px"></div>
<p style="left:32px;top:5px">Introduce INSERT Statement</p><p style="left:221px;top:5px">Ctrl+Alt+I</p>
<p style="left:32px;top:27px">Introduce UPDATE Statement</p><p style="left:221px;top:27px">Ctrl+Alt+U</p>
<p style="left:32px;top:49px">Introduce DELETE Statement</p><p style="left:221px;top:49px">Ctrl+Alt+D</p>
<p style="left:32px;top:71px">Introduce SELECT Statement</p><p style="left:221px;top:71px">Ctrl+Alt+S</p>
<p style="left:32px;top:96px">Introduce Columns</p><p style="left:221px;top:96px">Ctrl+Alt+C</p>
<p style="left:32px;top:118px">Introduce Qualified Columns</p><p style="left:221px;top:118px">Ctrl+Alt+X</p>
<p style="left:32px;top:140px">Introduce Value Stubs</p><p style="left:221px;top:140px">Ctrl+Alt+V</p>
<p style="left:32px;top:165px">Toggle Statement Comment</p><p style="left:221px;top:165px">Ctrl+Alt+Slash</p>
<p style="left:32px;top:187px">Toggle // Line Comment</p><p style="left:221px;top:187px">Ctrl+Slash</p>
<p style="left:32px;top:209px">Toggle -- Line Comment</p><p style="left:221px;top:209px">Ctrl+Minus</p>
<p style="left:32px;top:231px">Toggle /* Block Comment</p><p style="left:221px;top:231px">Ctrl+Shift+Slash</p>
<p style="left:32px;top:256px">Morph To Upper Case</p><p style="left:221px;top:256px">Ctrl+Alt+P</p>
<p style="left:32px;top:278px">Morph To Lower Case</p><p style="left:221px;top:278px">Ctrl+Alt+L</p>
<p style="left:32px;top:300px">Morph To Delimited List</p><p style="left:221px;top:300px">Ctrl+Alt+O</p>
<p style="left:32px;top:325px">Format Current Statement</p><p style="left:221px;top:325px">Ctrl+B</p>
<p style="left:32px;top:347px">Format Script</p><p style="left:221px;top:347px">Ctrl+Shift+B</p>
<svg width="318" height="366">
<use href="#sc" x="12" y="13"/><path d="M9 13h5v-2.500l4 3.500-4 3.500V15H9z" fill="#3aa858"/>
<use href="#sc" x="12" y="35"/><path d="M10 39L18 30l2 2-8 9-3 1z" fill="#4aa860"/>
<use href="#sc" x="12" y="57"/><path d="M13 58h7v7h-7z" fill="#f0c0c0" stroke="#d03030"/>
<use href="#sc" x="12" y="79"/>
<path d="M9.500 98.500h11v8h-11z" fill="#fff" stroke="#666"/><path d="M9 98h12v2H9z" fill="#3d7fb8"/><path d="M10 109l5-5 5 5z" fill="#2f9e44"/>
<path d="M13.500 119.500h12v8h-12z" fill="#fff" stroke="#666"/><path d="M13 119h13v2H13z" fill="#3d7fb8"/><path d="M7 122h5v3H7zM7 129h5v3H7z" fill="#e8b040"/><path d="M15 131l5-5 5 5z" fill="#2f9e44"/>
<path d="M8 145h15v5H8z" fill="#fff" stroke="#3d7fb8"/><path d="M8 143l6 5-6 5z" fill="#2f9e44"/>
<use href="#sc" x="12" y="171"/><ellipse cx="12" cy="171" rx="6" ry="3" fill="none" stroke="#222" stroke-width="1.600"/>
<use href="#sc" x="12" y="193"/><path d="M8 199l8-12" stroke="#333" stroke-width="1.400"/>
<use href="#sc" x="12" y="215"/><path d="M9 216h3M14 216h3" stroke="#222" stroke-width="1.600"/>
<use href="#sc" x="12" y="237"/><path d="M8 243l8-12M14 239h5M16.500 237v4" stroke="#333" stroke-width="1.200"/>
<use href="#sc" x="12" y="262"/><path d="M13 270l3-6 3 6z" fill="#2d6ca8"/>
<use href="#sc" x="12" y="284"/><path d="M14 287h5v5h-5z" fill="#3aa880"/>
<use href="#sc" x="12" y="306"/><path d="M13 307h5M16 305v5" stroke="#222"/>
<use href="#sc" x="12" y="331"/><path d="M11 339l4-7 4 7z" fill="#2d5ca8"/>
<use href="#sc" x="12" y="353"/><path d="M11 361l4-7 4 7z" fill="none" stroke="#2d5ca8" stroke-width="1.500"/>
</svg>
</div>
</body></html>
